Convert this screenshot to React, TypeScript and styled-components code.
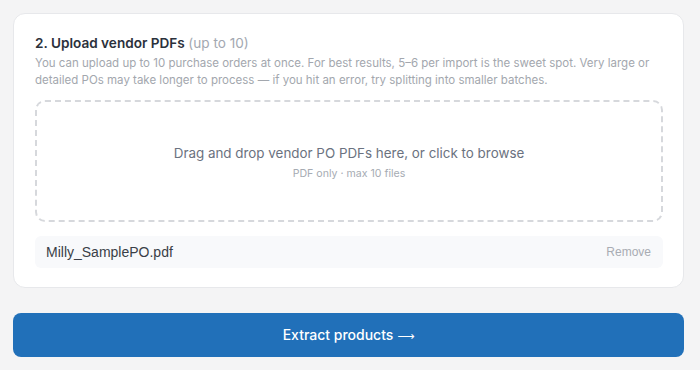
import styled, { createGlobalStyle } from "styled-components";

const GlobalStyle = createGlobalStyle`
  html, body {
    margin: 0;
    padding: 0;
    background: #f4f4f5;
    font-family: Inter, "Noto Sans", sans-serif;
    -webkit-font-smoothing: antialiased;
  }
`;

const Page = styled.div`
  width: 671px;
  padding: 13px 0 0 13px;
  display: flex;
  flex-direction: column;
  gap: 25px;
`;

const Card = styled.section`
  background: #ffffff;
  border: 1px solid #e7e8eb;
  border-radius: 12px;
  padding: 19px 20px 19px 21px;
  display: flex;
  flex-direction: column;
`;

const Title = styled.h2`
  margin: 0;
  font-size: 13.6px;
  line-height: 20px;
  font-weight: 600;
  color: #2b313c;
`;

const Muted = styled.span`
  font-weight: 400;
  color: #a3a8b1;
`;

const Description = styled.p`
  margin: 2px 0 0;
  font-size: 11.5px;
  line-height: 17px;
  color: #a3a7ae;
`;

const DropZone = styled.div`
  margin-top: 11px;
  height: 118px;
  border: 2px dashed #d6d8dc;
  border-radius: 10px;
  display: flex;
  flex-direction: column;
  align-items: center;
  justify-content: center;
  gap: 5px;
  cursor: pointer;
`;

const DropText = styled.div`
  font-size: 13.4px;
  line-height: 18px;
  color: #6b7280;
  margin-top: 2px;
`;

const DropHint = styled.div`
  font-size: 10.6px;
  line-height: 14px;
  color: #a6abb3;
`;

const FileRow = styled.div`
  margin-top: 14px;
  height: 32px;
  padding: 0 12px 0 11px;
  background: #f8f9fb;
  border-radius: 6px;
  display: flex;
  align-items: center;
  justify-content: space-between;
`;

const FileName = styled.span`
  font-family: "Liberation Sans", Arial, sans-serif;
  font-size: 14px;
  color: #3a3f47;
`;

const RemoveButton = styled.button`
  border: none;
  background: none;
  padding: 0;
  font-family: "Liberation Sans", Arial, sans-serif;
  font-size: 12px;
  color: #a8acb3;
  cursor: pointer;
`;

const PrimaryButton = styled.button`
  height: 44px;
  width: 100%;
  border: none;
  border-radius: 8px;
  background: #2170b9;
  color: #ffffff;
  font-family: inherit;
  font-size: 14px;
  line-height: 20px;
  font-weight: 500;
  cursor: pointer;
`;

const Arrow = styled.span`
  font-family: "DejaVu Sans", sans-serif;
  font-size: 12px;
  line-height: 1;
  font-weight: 400;
`;

export default function App() {
  return (
    <>
      <GlobalStyle />
      <Page>
        <Card>
          <Title>
            2. Upload vendor PDFs <Muted>(up to 10)</Muted>
          </Title>
          <Description>
            You can upload up to 10 purchase orders at once. For best results, 5–6 per import is
            the sweet spot. Very large or detailed POs may take longer to process — if you hit an
            error, try splitting into smaller batches.
          </Description>
          <DropZone>
            <DropText>Drag and drop vendor PO PDFs here, or click to browse</DropText>
            <DropHint>PDF only · max 10 files</DropHint>
          </DropZone>
          <FileRow>
            <FileName>Milly_SamplePO.pdf</FileName>
            <RemoveButton>Remove</RemoveButton>
          </FileRow>
        </Card>
        <PrimaryButton>
          Extract products <Arrow>⟶</Arrow>
        </PrimaryButton>
      </Page>
    </>
  );
}
